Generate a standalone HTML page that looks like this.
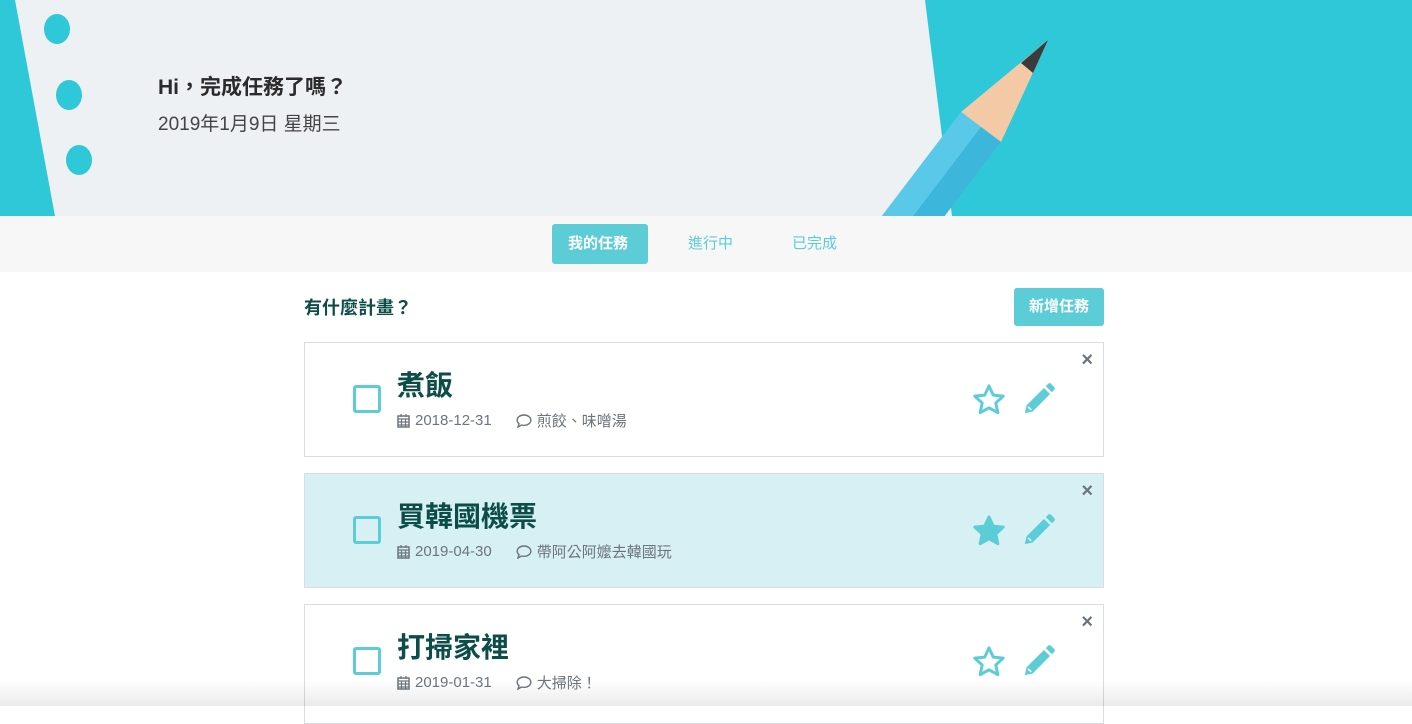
<!DOCTYPE html>
<html><head><meta charset="utf-8"><style>
*{margin:0;padding:0;box-sizing:border-box}
body{width:1412px;height:706px;overflow:hidden;background:#fff;font-family:"Liberation Sans","Noto Sans CJK TC",sans-serif;position:relative}
.hero{position:absolute;left:0;top:0;width:1412px;height:216px;background:#2fc8d8;overflow:hidden}
.hero svg{position:absolute;left:0;top:0}
.h1{position:absolute;left:158px;top:71px;font-size:21px;font-weight:bold;color:#2b2b2b}
.h2{position:absolute;left:158px;top:109px;font-size:19px;color:#444}
.tabs{position:absolute;top:216px;left:0;width:1412px;height:56px;background:#f7f7f7}
.tab{position:absolute;top:8px;height:40px;line-height:40px;font-size:15px;color:#5ccdd6;padding:0 16px;border-radius:3px}
.tab.on{background:#5ccdd6;color:#fff;font-weight:bold}
.q{position:absolute;left:304px;top:294px;font-size:18px;font-weight:bold;color:#0d4d48}
.add{position:absolute;left:1014px;top:288px;width:90px;height:38px;background:#5ccdd6;color:#fff;border-radius:3px;font-size:15px;font-weight:bold;text-align:center;line-height:38px}
.card{position:absolute;left:304px;width:800px;height:115px;border:1px solid #d8dde2;background:#fff}
.card.hl{background:#d6f0f3}
.cb{position:absolute;left:48px;top:42px;width:28px;height:28px;border:3px solid #5ccdd6;border-radius:3px}
.t{position:absolute;left:92px;top:21px;font-size:28px;font-weight:bold;color:#0d4d48}
.m{position:absolute;left:92px;top:67px;font-size:15px;color:#6c757d;white-space:nowrap;display:flex;align-items:center}
.m svg{margin-right:5px}
.m .c{margin-left:24px}
.x{position:absolute;right:10px;top:6px;font-size:20px;font-weight:bold;color:#6c757d}
.star{position:absolute;left:666px;top:40px}
.pen{position:absolute;left:717px;top:39px}
.shadow{position:absolute;left:0;top:680px;width:1412px;height:26px;background:linear-gradient(#ffffff00,#00000014)}
</style></head><body>
<div class="hero">
<svg width="1412" height="216">
<polygon points="15,0 925,0 952,216 55,216" fill="#eef1f3"/>
<ellipse cx="57" cy="29" rx="13" ry="15" fill="#2fc8d8"/>
<ellipse cx="69" cy="95" rx="13" ry="15" fill="#2fc8d8"/>
<ellipse cx="79" cy="160" rx="13" ry="15" fill="#2fc8d8"/>
<polygon points="1048,40 1001,142 961,112" fill="#f3c9a6"/>
<polygon points="1048,40 1033,73 1021,63" fill="#3b3b3b"/>
<polygon points="1001,142 961,112 846,263 886,293" fill="#5ac8e8"/>
<polygon points="1001,142 981,127 866,278 886,293" fill="#3cb6da"/>
</svg>
<div class="h1">Hi，完成任務了嗎？</div>
<div class="h2">2019年1月9日 星期三</div>
</div>
<div class="tabs">
<div class="tab on" style="left:552px;width:96px">我的任務</div>
<div class="tab" style="left:672px">進行中</div>
<div class="tab" style="left:776px">已完成</div>
</div>
<div class="q">有什麼計畫？</div>
<div class="add">新增任務</div>

<div class="card" style="top:342px">
<div class="cb"></div><div class="t">煮飯</div>
<div class="m"><svg width="13" height="14" viewBox="0 0 13 14"><rect x="1" y="2" width="11" height="11" fill="none" stroke="#6c757d" stroke-width="1.5"/><path d="M1 5h11M1 8h11M1 11h11M4.5 5v8M8.5 5v8M4 0v3M9 0v3" stroke="#6c757d" stroke-width="1.2"/></svg>2018-12-31<svg class="c" width="16" height="14" viewBox="0 0 16 14"><path d="M8 1C4 1 1.2 3.3 1.2 6.2c0 1.4.7 2.6 1.8 3.5L2 13l3.6-2c.8.2 1.6.3 2.4.3 4 0 6.8-2.3 6.8-5.1S12 1 8 1z" fill="none" stroke="#6c757d" stroke-width="1.4"/></svg>煎餃、味噌湯</div>
<div class="x">×</div>
<svg class="star" width="36" height="34" viewBox="0 0 24 23"><path d="M12 2l2.9 6.2 6.7.7-5 4.6 1.4 6.6L12 16.8 6 20.1l1.4-6.6-5-4.6 6.7-.7z" fill="none" stroke="#5ccdd6" stroke-width="2" stroke-linejoin="round"/></svg>
<svg class="pen" width="34" height="34" viewBox="0 0 24 24"><path d="M2 22l1.2-5.5L15.5 4.2l4.3 4.3L7.5 20.8z M16.8 2.9l1.6-1.6a1.5 1.5 0 0 1 2.1 0l2.2 2.2a1.5 1.5 0 0 1 0 2.1l-1.6 1.6z" fill="#5ccdd6"/><path d="M4.3 17.5l2.2 2.2" stroke="#fff" stroke-width="1.2"/></svg>
</div>

<div class="card hl" style="top:473px">
<div class="cb"></div><div class="t">買韓國機票</div>
<div class="m"><svg width="13" height="14" viewBox="0 0 13 14"><rect x="1" y="2" width="11" height="11" fill="none" stroke="#6c757d" stroke-width="1.5"/><path d="M1 5h11M1 8h11M1 11h11M4.5 5v8M8.5 5v8M4 0v3M9 0v3" stroke="#6c757d" stroke-width="1.2"/></svg>2019-04-30<svg class="c" width="16" height="14" viewBox="0 0 16 14"><path d="M8 1C4 1 1.2 3.3 1.2 6.2c0 1.4.7 2.6 1.8 3.5L2 13l3.6-2c.8.2 1.6.3 2.4.3 4 0 6.8-2.3 6.8-5.1S12 1 8 1z" fill="none" stroke="#6c757d" stroke-width="1.4"/></svg>帶阿公阿嬤去韓國玩</div>
<div class="x">×</div>
<svg class="star" width="36" height="34" viewBox="0 0 24 23"><path d="M12 2l2.9 6.2 6.7.7-5 4.6 1.4 6.6L12 16.8 6 20.1l1.4-6.6-5-4.6 6.7-.7z" fill="#5ccdd6" stroke="#5ccdd6" stroke-width="2" stroke-linejoin="round"/></svg>
<svg class="pen" width="34" height="34" viewBox="0 0 24 24"><path d="M2 22l1.2-5.5L15.5 4.2l4.3 4.3L7.5 20.8z M16.8 2.9l1.6-1.6a1.5 1.5 0 0 1 2.1 0l2.2 2.2a1.5 1.5 0 0 1 0 2.1l-1.6 1.6z" fill="#5ccdd6"/><path d="M4.3 17.5l2.2 2.2" stroke="#d6f0f3" stroke-width="1.2"/></svg>
</div>

<div class="card" style="top:604px;height:120px">
<div class="cb"></div><div class="t">打掃家裡</div>
<div class="m"><svg width="13" height="14" viewBox="0 0 13 14"><rect x="1" y="2" width="11" height="11" fill="none" stroke="#6c757d" stroke-width="1.5"/><path d="M1 5h11M1 8h11M1 11h11M4.5 5v8M8.5 5v8M4 0v3M9 0v3" stroke="#6c757d" stroke-width="1.2"/></svg>2019-01-31<svg class="c" width="16" height="14" viewBox="0 0 16 14"><path d="M8 1C4 1 1.2 3.3 1.2 6.2c0 1.4.7 2.6 1.8 3.5L2 13l3.6-2c.8.2 1.6.3 2.4.3 4 0 6.8-2.3 6.8-5.1S12 1 8 1z" fill="none" stroke="#6c757d" stroke-width="1.4"/></svg>大掃除！</div>
<div class="x">×</div>
<svg class="star" width="36" height="34" viewBox="0 0 24 23"><path d="M12 2l2.9 6.2 6.7.7-5 4.6 1.4 6.6L12 16.8 6 20.1l1.4-6.6-5-4.6 6.7-.7z" fill="none" stroke="#5ccdd6" stroke-width="2" stroke-linejoin="round"/></svg>
<svg class="pen" width="34" height="34" viewBox="0 0 24 24"><path d="M2 22l1.2-5.5L15.5 4.2l4.3 4.3L7.5 20.8z M16.8 2.9l1.6-1.6a1.5 1.5 0 0 1 2.1 0l2.2 2.2a1.5 1.5 0 0 1 0 2.1l-1.6 1.6z" fill="#5ccdd6"/><path d="M4.3 17.5l2.2 2.2" stroke="#fff" stroke-width="1.2"/></svg>
</div>
<div class="shadow"></div>
</body></html>
